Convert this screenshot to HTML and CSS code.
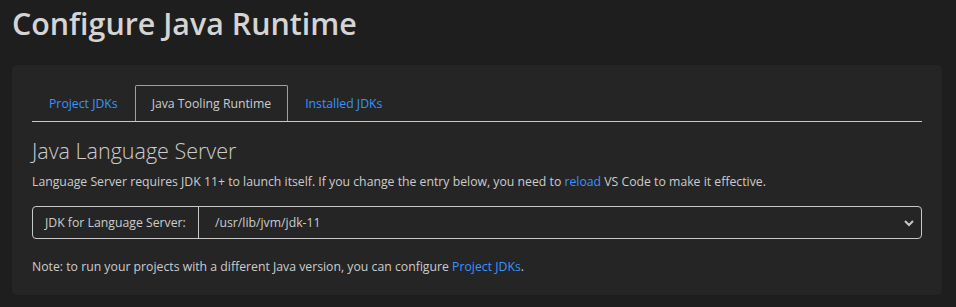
FILE: index.html
```html
<!DOCTYPE html>
<html>
<head>
<meta charset="utf-8">
<link rel="stylesheet" href="styles.css">
</head>
<body>
<h1 class="title">Configure Java Runtime</h1>
<div class="card">
  <ul class="tabs">
    <li class="tab">Project JDKs</li>
    <li class="tab active">Java Tooling Runtime</li>
    <li class="tab">Installed JDKs</li>
  </ul>
  <h2 class="section-title">Java Language Server</h2>
  <p class="desc">Language Server requires JDK 11+ to launch itself. If you change the entry below, you need to <span class="link">reload</span> VS Code to make it effective.</p>
  <div class="input-group">
    <div class="label">JDK for Language Server:</div>
    <div class="select">
      <span>/usr/lib/jvm/jdk-11</span>
      <svg class="chev" width="12" height="12" viewBox="0 0 12 12"><path d="M2 4 L6 8 L10 4" fill="none" stroke="#c8c8c8" stroke-width="2"/></svg>
    </div>
  </div>
  <p class="note">Note: to run your projects with a different Java version, you can configure <span class="link">Project JDKs</span>.</p>
</div>
</body>
</html>
```
FILE: styles.css
```css
html, body {
  margin: 0;
  padding: 0;
  background: #1e1e1e;
}
body {
  padding: 0 14px 0 12px;
  font-family: "Open Sans", "Noto Sans", sans-serif;
  color: #cccccc;
  font-size: 12.25px;
}
.title {
  margin: 0;
  padding-top: 2px;
  height: 63px;
  font-size: 30.4px;
  font-weight: 600;
  line-height: 44px;
  color: #d4d4d4;
}
.card {
  background: #252526;
  border-radius: 5px;
  padding: 20px 20px 20px 20px;
  height: 190px;
}
.tabs {
  list-style: none;
  margin: 0;
  padding: 0;
  display: flex;
  border-bottom: 1px solid #c8c8c8;
  height: 36px;
}
.tab {
  padding: 0 16px;
  line-height: 36px;
  color: #3794ff;
  border: 1px solid transparent;
  border-bottom: none;
  border-radius: 2px 2px 0 0;
  white-space: nowrap;
}
.tab.active {
  color: #cccccc;
  border-color: #d39a3a;
  height: 35px;
  line-height: 35px;
  background: #252526;
}
.section-title {
  margin: 14px 0 0;
  font-size: 21.5px;
  font-weight: 300;
  line-height: 30px;
  color: #cccccc;
}
.desc {
  margin: 6px 0 0;
  line-height: 20px;
}
.link {
  color: #3794ff;
}
.input-group {
  margin-top: 14px;
  display: flex;
  height: 31px;
  border: 1px solid #c8c8c8;
  border-radius: 4px;
}
.label {
  padding: 0 12px;
  width: 141px;
  line-height: 31px;
  border-right: 1px solid #c8c8c8;
  color: #cccccc;
  white-space: nowrap;
}
.select {
  flex: 1;
  display: flex;
  align-items: center;
  justify-content: space-between;
  padding: 0 6px 0 16px;
}
.chev {
  display: block;
}
.note {
  margin: 18px 0 0;
  line-height: 20px;
}
```
